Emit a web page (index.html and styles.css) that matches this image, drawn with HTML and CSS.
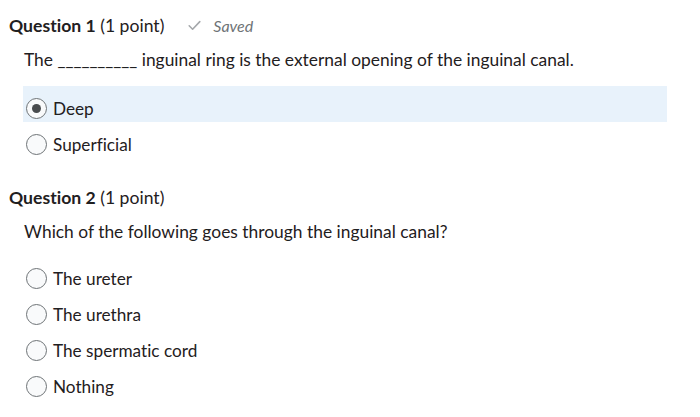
FILE: index.html
```html
<!DOCTYPE html>
<html>
<head>
<meta charset="utf-8">
<link rel="stylesheet" href="styles.css">
</head>
<body>
<div class="page">
  <section class="question">
    <div class="q-head">
      <span class="q-title"><b>Question 1</b> (1 point)</span>
      <span class="saved">
        <svg class="check" width="13" height="11" viewBox="0 0 13 11"><path d="M1.2 5.8 L4.6 9.2 L11.8 1.6" fill="none" stroke="#a5a8ab" stroke-width="1.6" stroke-linecap="round" stroke-linejoin="round"/></svg>
        <i>Saved</i>
      </span>
    </div>
    <p class="q-text">The __________ inguinal ring is the external opening of the inguinal canal.</p>
    <div class="options">
      <label class="option selected"><span class="radio checked"></span><span>Deep</span></label>
      <label class="option"><span class="radio"></span><span>Superficial</span></label>
    </div>
  </section>
  <section class="question q2">
    <div class="q-head">
      <span class="q-title"><b>Question 2</b> (1 point)</span>
    </div>
    <p class="q-text">Which of the following goes through the inguinal canal?</p>
    <div class="options">
      <label class="option"><span class="radio"></span><span>The ureter</span></label>
      <label class="option"><span class="radio"></span><span>The urethra</span></label>
      <label class="option"><span class="radio"></span><span>The spermatic cord</span></label>
      <label class="option"><span class="radio"></span><span>Nothing</span></label>
    </div>
  </section>
</div>
</body>
</html>
```
FILE: styles.css
```css
html, body {
  margin: 0;
  padding: 0;
  background: #ffffff;
}
body {
  font-family: Lato, "Open Sans", sans-serif;
  color: #1f2021;
  font-size: 17.2px;
  font-variant-ligatures: none;
}
.page {
  padding: 14px 0 0 9px;
  width: 658px;
}
.q-head {
  display: flex;
  align-items: center;
  height: 22px;
  gap: 24px;
}
.q-title {
  font-size: 17.6px;
}
.q-title b {
  font-weight: 700;
}
.saved {
  display: flex;
  align-items: center;
  gap: 12px;
  color: #6e7376;
  font-size: 16px;
}
.check {
  display: block;
}
.q-text {
  margin: 13px 0 0 15px;
  line-height: 22px;
  font-size: 17.4px;
}
.options {
  margin: 15px 0 0 14px;
  display: flex;
  flex-direction: column;
}
.option {
  display: flex;
  align-items: center;
  gap: 6px;
  height: 36px;
  box-sizing: border-box;
  padding: 8px 0 0 3px;
}
.option.selected {
  background: #e8f2fb;
}
.radio {
  width: 21px;
  height: 21px;
  box-sizing: border-box;
  border: 1.5px solid #6e7376;
  border-radius: 50%;
  background: #f9fafb;
  display: flex;
  align-items: center;
  justify-content: center;
  flex: none;
}
.radio.checked::after {
  content: "";
  width: 9px;
  height: 9px;
  border-radius: 50%;
  background: #494c4e;
}
.q2 {
  margin-top: 28px;
}
.q2 .options {
  margin-top: 13px;
}
```
